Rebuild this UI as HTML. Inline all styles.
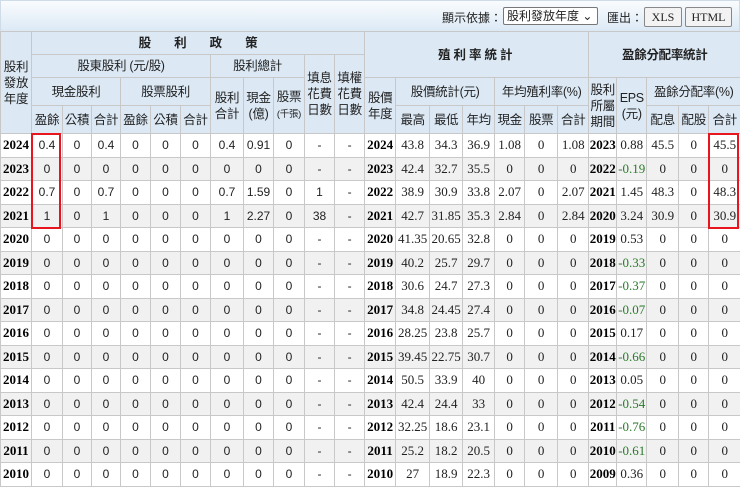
<!DOCTYPE html>
<html><head><meta charset="utf-8">
<style>
*{margin:0;padding:0;box-sizing:border-box}
body{width:740px;height:485px;overflow:hidden;background:#fff;font-family:"Liberation Sans","Noto Sans CJK TC",sans-serif}
.top{height:31px;background:linear-gradient(#fafcfe,#dce9f5);border:1px solid #cfdbe6;border-bottom:none;position:relative;font-size:12px;color:#222}
.top .lbl{position:absolute;top:8px}
.sel{position:absolute;left:502px;top:6px;width:95px;height:18px;border:1px solid #777;border-radius:2px;background:#fff;font-size:12px;padding-left:3px;line-height:16px}
.btn{position:absolute;top:6px;height:20px;border:1px solid #888;border-radius:2px;background:#f3f3f3;font-family:"Liberation Serif",serif;font-size:12px;text-align:center;line-height:18px}
table{border-collapse:collapse;table-layout:fixed;width:740px;position:absolute;top:31px;left:0}
td,th{border:1px solid #c8c8c8;text-align:center;padding:0;overflow:hidden;white-space:nowrap}
th{background:#dce9f5;font-weight:normal;font-size:12.5px;color:#222;line-height:16px;letter-spacing:-0.3px}
th.b{font-weight:bold}
td{font-size:12px;color:#222;height:23.5px}
td.y{font-family:"Liberation Serif",serif;font-weight:bold;font-size:13px;color:#000}
td.s{font-family:"Liberation Serif",serif;font-size:13px}
tr.g td{background:#f1f1f1}
.n{color:#2a7a2a}
.sm{font-size:9.5px}
.red{position:absolute;border:2px solid #e8141e}
</style></head><body>
<div class="top">
<span class="lbl" style="left:441px">顯示依據：</span>
<div class="sel">股利發放年度 &#8964;</div>
<span class="lbl" style="left:606px">匯出：</span>
<div class="btn" style="left:643px;width:38px">XLS</div>
<div class="btn" style="left:684px;width:47px">HTML</div>
</div>
<table>
<colgroup>
<col style="width:31px"><col style="width:31px"><col style="width:29px"><col style="width:29px"><col style="width:30px"><col style="width:30px"><col style="width:30px"><col style="width:33px"><col style="width:30px"><col style="width:31px"><col style="width:30px"><col style="width:30px"><col style="width:31px"><col style="width:34px"><col style="width:33px"><col style="width:32px"><col style="width:30px"><col style="width:33px"><col style="width:31px"><col style="width:28px"><col style="width:30px"><col style="width:32px"><col style="width:30px"><col style="width:32px">
</colgroup>
<tr style="height:23px"><th rowspan="4">股利<br>發放<br>年度</th><th colspan="11" class="b" style="letter-spacing:23px;padding-left:23px">股利政策</th><th colspan="7" rowspan="2" class="b" style="letter-spacing:3px">殖利率統計</th><th colspan="5" rowspan="2" class="b">盈餘分配率統計</th></tr>
<tr style="height:23px"><th colspan="6">股東股利 (元/股)</th><th colspan="3">股利總計</th><th rowspan="3">填息<br>花費<br>日數</th><th rowspan="3">填權<br>花費<br>日數</th></tr>
<tr style="height:28px"><th colspan="3">現金股利</th><th colspan="3">股票股利</th><th rowspan="2">股利<br>合計</th><th rowspan="2">現金<br>(億)</th><th rowspan="2">股票<br><span class="sm">(千張)</span></th><th rowspan="2">股價<br>年度</th><th colspan="3">股價統計(元)</th><th colspan="3">年均殖利率(%)</th><th rowspan="2">股利<br>所屬<br>期間</th><th rowspan="2">EPS<br>(元)</th><th colspan="3">盈餘分配率(%)</th></tr>
<tr style="height:28px"><th>盈餘</th><th>公積</th><th>合計</th><th>盈餘</th><th>公積</th><th>合計</th><th>最高</th><th>最低</th><th>年均</th><th>現金</th><th>股票</th><th>合計</th><th>配息</th><th>配股</th><th>合計</th></tr>
<tr><td class="y">2024</td><td>0.4</td><td>0</td><td>0.4</td><td>0</td><td>0</td><td>0</td><td>0.4</td><td>0.91</td><td>0</td><td>-</td><td>-</td><td class="y">2024</td><td class="s">43.8</td><td class="s">34.3</td><td class="s">36.9</td><td class="s">1.08</td><td class="s">0</td><td class="s">1.08</td><td class="y">2023</td><td class="s">0.88</td><td class="s">45.5</td><td class="s">0</td><td class="s">45.5</td></tr>
<tr class="g"><td class="y">2023</td><td>0</td><td>0</td><td>0</td><td>0</td><td>0</td><td>0</td><td>0</td><td>0</td><td>0</td><td>-</td><td>-</td><td class="y">2023</td><td class="s">42.4</td><td class="s">32.7</td><td class="s">35.5</td><td class="s">0</td><td class="s">0</td><td class="s">0</td><td class="y">2022</td><td class="s n">-0.19</td><td class="s">0</td><td class="s">0</td><td class="s">0</td></tr>
<tr><td class="y">2022</td><td>0.7</td><td>0</td><td>0.7</td><td>0</td><td>0</td><td>0</td><td>0.7</td><td>1.59</td><td>0</td><td>1</td><td>-</td><td class="y">2022</td><td class="s">38.9</td><td class="s">30.9</td><td class="s">33.8</td><td class="s">2.07</td><td class="s">0</td><td class="s">2.07</td><td class="y">2021</td><td class="s">1.45</td><td class="s">48.3</td><td class="s">0</td><td class="s">48.3</td></tr>
<tr class="g"><td class="y">2021</td><td>1</td><td>0</td><td>1</td><td>0</td><td>0</td><td>0</td><td>1</td><td>2.27</td><td>0</td><td>38</td><td>-</td><td class="y">2021</td><td class="s">42.7</td><td class="s">31.85</td><td class="s">35.3</td><td class="s">2.84</td><td class="s">0</td><td class="s">2.84</td><td class="y">2020</td><td class="s">3.24</td><td class="s">30.9</td><td class="s">0</td><td class="s">30.9</td></tr>
<tr><td class="y">2020</td><td>0</td><td>0</td><td>0</td><td>0</td><td>0</td><td>0</td><td>0</td><td>0</td><td>0</td><td>-</td><td>-</td><td class="y">2020</td><td class="s">41.35</td><td class="s">20.65</td><td class="s">32.8</td><td class="s">0</td><td class="s">0</td><td class="s">0</td><td class="y">2019</td><td class="s">0.53</td><td class="s">0</td><td class="s">0</td><td class="s">0</td></tr>
<tr class="g"><td class="y">2019</td><td>0</td><td>0</td><td>0</td><td>0</td><td>0</td><td>0</td><td>0</td><td>0</td><td>0</td><td>-</td><td>-</td><td class="y">2019</td><td class="s">40.2</td><td class="s">25.7</td><td class="s">29.7</td><td class="s">0</td><td class="s">0</td><td class="s">0</td><td class="y">2018</td><td class="s n">-0.33</td><td class="s">0</td><td class="s">0</td><td class="s">0</td></tr>
<tr><td class="y">2018</td><td>0</td><td>0</td><td>0</td><td>0</td><td>0</td><td>0</td><td>0</td><td>0</td><td>0</td><td>-</td><td>-</td><td class="y">2018</td><td class="s">30.6</td><td class="s">24.7</td><td class="s">27.3</td><td class="s">0</td><td class="s">0</td><td class="s">0</td><td class="y">2017</td><td class="s n">-0.37</td><td class="s">0</td><td class="s">0</td><td class="s">0</td></tr>
<tr class="g"><td class="y">2017</td><td>0</td><td>0</td><td>0</td><td>0</td><td>0</td><td>0</td><td>0</td><td>0</td><td>0</td><td>-</td><td>-</td><td class="y">2017</td><td class="s">34.8</td><td class="s">24.45</td><td class="s">27.4</td><td class="s">0</td><td class="s">0</td><td class="s">0</td><td class="y">2016</td><td class="s n">-0.07</td><td class="s">0</td><td class="s">0</td><td class="s">0</td></tr>
<tr><td class="y">2016</td><td>0</td><td>0</td><td>0</td><td>0</td><td>0</td><td>0</td><td>0</td><td>0</td><td>0</td><td>-</td><td>-</td><td class="y">2016</td><td class="s">28.25</td><td class="s">23.8</td><td class="s">25.7</td><td class="s">0</td><td class="s">0</td><td class="s">0</td><td class="y">2015</td><td class="s">0.17</td><td class="s">0</td><td class="s">0</td><td class="s">0</td></tr>
<tr class="g"><td class="y">2015</td><td>0</td><td>0</td><td>0</td><td>0</td><td>0</td><td>0</td><td>0</td><td>0</td><td>0</td><td>-</td><td>-</td><td class="y">2015</td><td class="s">39.45</td><td class="s">22.75</td><td class="s">30.7</td><td class="s">0</td><td class="s">0</td><td class="s">0</td><td class="y">2014</td><td class="s n">-0.66</td><td class="s">0</td><td class="s">0</td><td class="s">0</td></tr>
<tr><td class="y">2014</td><td>0</td><td>0</td><td>0</td><td>0</td><td>0</td><td>0</td><td>0</td><td>0</td><td>0</td><td>-</td><td>-</td><td class="y">2014</td><td class="s">50.5</td><td class="s">33.9</td><td class="s">40</td><td class="s">0</td><td class="s">0</td><td class="s">0</td><td class="y">2013</td><td class="s">0.05</td><td class="s">0</td><td class="s">0</td><td class="s">0</td></tr>
<tr class="g"><td class="y">2013</td><td>0</td><td>0</td><td>0</td><td>0</td><td>0</td><td>0</td><td>0</td><td>0</td><td>0</td><td>-</td><td>-</td><td class="y">2013</td><td class="s">42.4</td><td class="s">24.4</td><td class="s">33</td><td class="s">0</td><td class="s">0</td><td class="s">0</td><td class="y">2012</td><td class="s n">-0.54</td><td class="s">0</td><td class="s">0</td><td class="s">0</td></tr>
<tr><td class="y">2012</td><td>0</td><td>0</td><td>0</td><td>0</td><td>0</td><td>0</td><td>0</td><td>0</td><td>0</td><td>-</td><td>-</td><td class="y">2012</td><td class="s">32.25</td><td class="s">18.6</td><td class="s">23.1</td><td class="s">0</td><td class="s">0</td><td class="s">0</td><td class="y">2011</td><td class="s n">-0.76</td><td class="s">0</td><td class="s">0</td><td class="s">0</td></tr>
<tr class="g"><td class="y">2011</td><td>0</td><td>0</td><td>0</td><td>0</td><td>0</td><td>0</td><td>0</td><td>0</td><td>0</td><td>-</td><td>-</td><td class="y">2011</td><td class="s">25.2</td><td class="s">18.2</td><td class="s">20.5</td><td class="s">0</td><td class="s">0</td><td class="s">0</td><td class="y">2010</td><td class="s n">-0.61</td><td class="s">0</td><td class="s">0</td><td class="s">0</td></tr>
<tr><td class="y">2010</td><td>0</td><td>0</td><td>0</td><td>0</td><td>0</td><td>0</td><td>0</td><td>0</td><td>0</td><td>-</td><td>-</td><td class="y">2010</td><td class="s">27</td><td class="s">18.9</td><td class="s">22.3</td><td class="s">0</td><td class="s">0</td><td class="s">0</td><td class="y">2009</td><td class="s">0.36</td><td class="s">0</td><td class="s">0</td><td class="s">0</td></tr>
</table>
<div class="red" style="left:31px;top:133px;width:30px;height:96px"></div>
<div class="red" style="left:708px;top:133px;width:31px;height:96px"></div>
</body></html>
